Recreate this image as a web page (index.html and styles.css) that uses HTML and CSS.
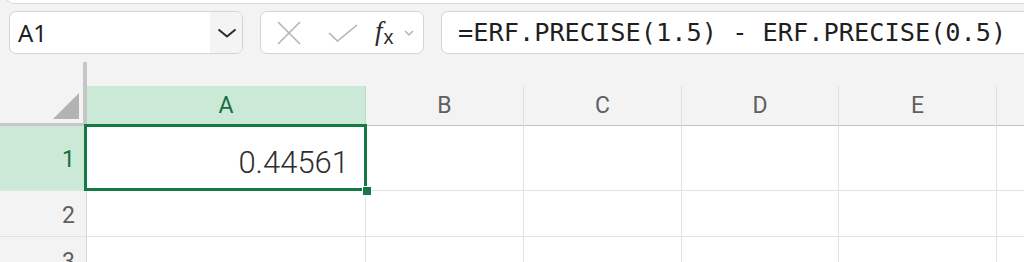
FILE: index.html
```html
<!DOCTYPE html>
<html lang="en">
<head>
  <meta charset="UTF-8" />
  <meta name="viewport" content="width=device-width, initial-scale=1.0" />
  <title>ERF.PRECISE</title>
  <link rel="stylesheet" href="styles.css">
</head>
<body>
  <div class="ribbon-edge"></div>

  <div class="formula-row">
    <div class="name-box">
      <span class="name">A1</span>
      <span class="name-drop">
        <svg width="20" height="10" viewBox="0 0 20 10"><path d="M1.5 1.5 L10 8.5 L18.5 1.5" fill="none" stroke="#2b2b2b" stroke-width="2"/></svg>
      </span>
    </div>

    <div class="fx-tools">
      <svg class="tool-x" width="24" height="24" viewBox="0 0 24 24"><path d="M1 1 L23 23 M23 1 L1 23" stroke="#b4b4b4" stroke-width="1.6"/></svg>
      <svg class="tool-ok" width="30" height="18" viewBox="0 0 30 18"><path d="M1 9 L9.5 17 L29 1" fill="none" stroke="#b4b4b4" stroke-width="1.6"/></svg>
      <span class="fx"><i>f</i><span class="fx-sub">x</span></span>
      <svg class="tool-more" width="10" height="6" viewBox="0 0 10 6"><path d="M1 1 L5 5 L9 1" fill="none" stroke="#a8a8a8" stroke-width="1.2"/></svg>
    </div>

    <div class="formula-input">=ERF.PRECISE(1.5) - ERF.PRECISE(0.5)</div>
  </div>

  <div class="sheet">
    <div class="corner"><span class="corner-tri"></span></div>
    <div class="gap"></div>

    <div class="col-head selected">A</div>
    <div class="col-head">B</div>
    <div class="col-head">C</div>
    <div class="col-head">D</div>
    <div class="col-head">E</div>
    <div class="col-head last"></div>

    <div class="row-head selected">1</div>
    <div class="cell active">
      <span class="value">0.44561</span>
      <div class="selection"><span class="fill-handle"></span></div>
    </div>
    <div class="cell"></div>
    <div class="cell"></div>
    <div class="cell"></div>
    <div class="cell"></div>
    <div class="cell last"></div>

    <div class="row-head">2</div>
    <div class="cell"></div>
    <div class="cell"></div>
    <div class="cell"></div>
    <div class="cell"></div>
    <div class="cell"></div>
    <div class="cell last"></div>

    <div class="row-head">3</div>
    <div class="cell"></div>
    <div class="cell"></div>
    <div class="cell"></div>
    <div class="cell"></div>
    <div class="cell"></div>
    <div class="cell last"></div>
  </div>
</body>
</html>
```

FILE: styles.css
```css
    body {
      margin: 0;
      background: #f3f3f3;
      font-family: 'Noto Sans', 'Liberation Sans', sans-serif;
      overflow: hidden;
      height: 262px;
    }

    .ribbon-edge {
      margin: -10px 0 0 5px;
      height: 13px;
      background: #ffffff;
      border: 1px solid #dadada;
      border-top: none;
      border-right: none;
      border-radius: 0 0 0 9px;
    }

    /* name box / formula bar */
    .formula-row {
      display: flex;
      gap: 17px;
      margin: 7px 0 0 9px;
      height: 43px;
    }

    .name-box, .fx-tools, .formula-input {
      box-sizing: border-box;
      background: #ffffff;
      border: 1px solid #d4d4d4;
      border-radius: 7px;
    }

    .name-box {
      width: 234px;
      display: flex;
      overflow: hidden;
    }

    .name {
      flex: 1;
      padding-left: 8px;
      font-size: 24px;
      line-height: 41px;
      color: #1f1f1f;
    }

    .name-drop {
      width: 30px;
      background: #f4f4f4;
      display: flex;
      align-items: center;
      justify-content: center;
      padding-left: 2px;
    }

    .fx-tools {
      width: 164px;
      display: flex;
      align-items: center;
      padding-left: 16px;
    }

    .tool-x { margin-right: 27px; }
    .tool-ok { margin-right: 17px; }

    .fx {
      font-family: 'Liberation Serif', serif;
      font-size: 27px;
      color: #2b2b2b;
      line-height: 1;
      margin-top: -2px;
    }

    .fx-sub {
      font-family: 'Liberation Sans', sans-serif;
      font-size: 20px;
      position: relative;
      top: 4px;
      margin-left: 1px;
    }

    .tool-more { margin-left: 10px; }

    .formula-input {
      flex: 1;
      margin-right: -20px;
      padding-left: 16px;
      font-family: 'DejaVu Sans Mono', 'Liberation Mono', monospace;
      font-size: 25.3px;
      line-height: 41px;
      color: #1f1f1f;
      white-space: nowrap;
    }

    /* grid */
    .sheet {
      display: grid;
      grid-template-columns: 87px 279px 158px 158px 157px 158px 1fr;
      grid-template-rows: 24px 40px 65px 46px 46px;
      margin-top: 8px;
      font-family: Roboto, 'Noto Sans', sans-serif;
    }

    .corner {
      grid-row: 1 / 3;
      box-sizing: border-box;
      border-right: 4px solid #c6c6c6;
      border-bottom: 3px solid #c6c6c6;
      display: flex;
      align-items: flex-end;
      justify-content: flex-end;
      padding: 0 4px 4px 0;
    }

    .corner-tri {
      width: 26px;
      height: 26px;
      background: #b3b3b3;
      clip-path: polygon(100% 0, 100% 100%, 0 100%);
    }

    .gap { grid-column: 2 / 8; }

    .col-head {
      box-sizing: border-box;
      border-right: 1px solid #e0e0e0;
      border-bottom: 1px solid #c4c4c4;
      text-align: center;
      font-size: 23px;
      line-height: 40px;
      color: #5f5f5f;
    }

    .col-head.selected {
      background: #cae9d7;
      color: #1d6b40;
      border-right-color: #b9dcc8;
    }

    .row-head {
      box-sizing: border-box;
      border-right: 1px solid #d6d6d6;
      border-bottom: 1px solid #e0e0e0;
      display: flex;
      align-items: center;
      justify-content: flex-end;
      padding: 3px 11px 0 0;
      font-size: 23px;
      color: #5f5f5f;
    }

    .row-head.selected {
      background: #cae9d7;
      color: #1d6b40;
    }

    .cell {
      box-sizing: border-box;
      background: #ffffff;
      border-right: 1px solid #e2e2e2;
      border-bottom: 1px solid #e2e2e2;
    }

    .last { border-right: none; }

    .cell.active {
      position: relative;
      display: flex;
      align-items: flex-end;
      justify-content: flex-end;
      padding: 0 16px 12px 0;
    }

    .value {
      font-weight: 300;
      font-size: 31px;
      line-height: 31px;
      color: #2e2e2e;
    }

    .selection {
      position: absolute;
      top: -2px;
      left: -3px;
      right: -2px;
      bottom: -1px;
      border: 3px solid #137a43;
      z-index: 2;
    }

    .fill-handle {
      position: absolute;
      right: -8px;
      bottom: -8px;
      width: 8px;
      height: 8px;
      background: #137a43;
      border: 1px solid #ffffff;
    }
```
